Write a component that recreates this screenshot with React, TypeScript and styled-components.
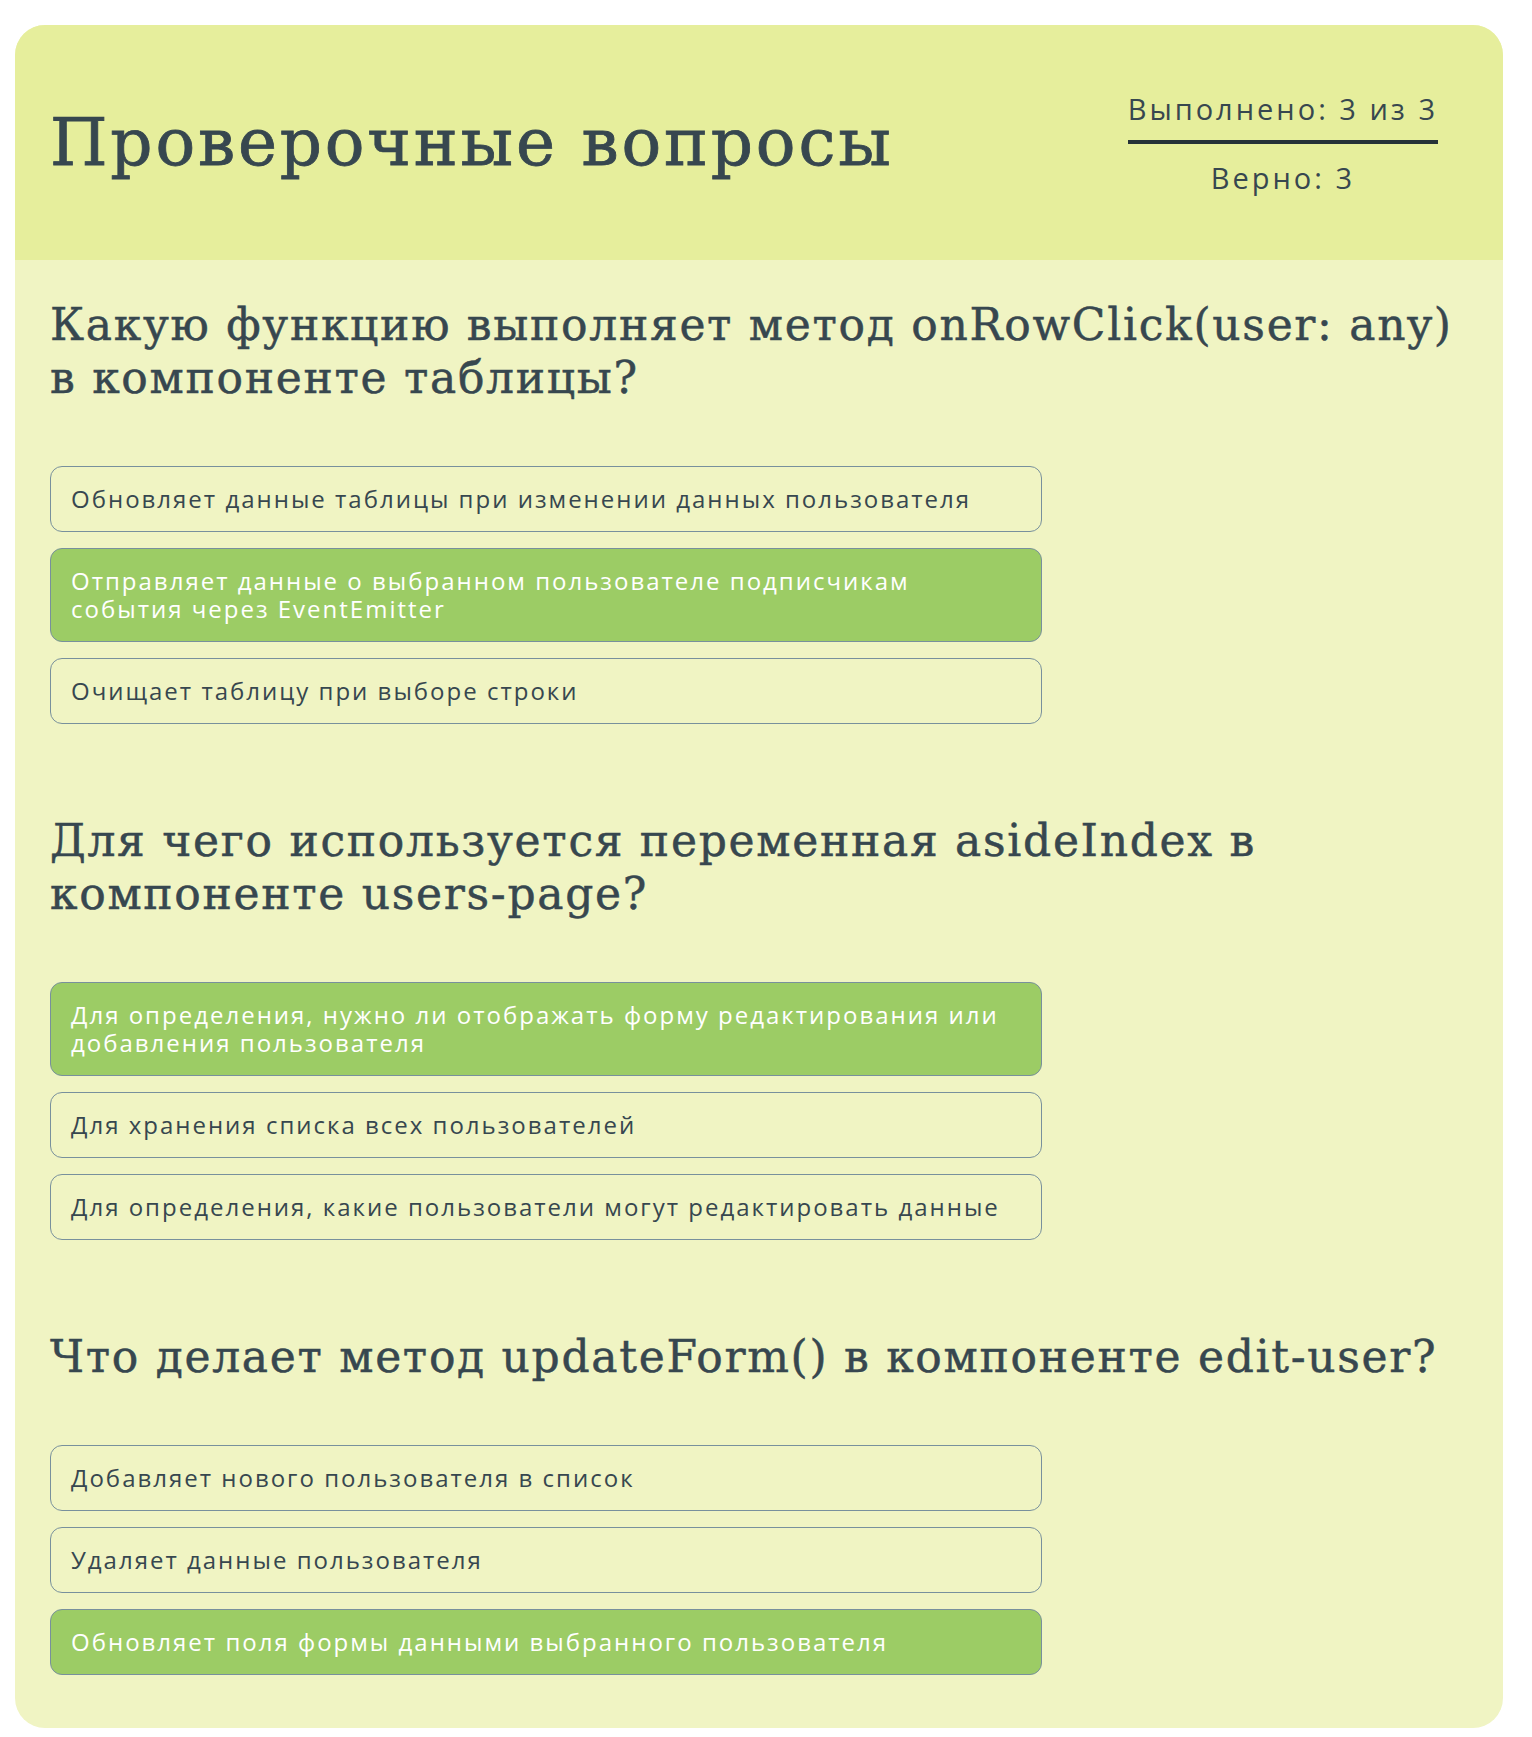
import * as React from "react";
import styled, { createGlobalStyle } from "styled-components";

const GlobalStyle = createGlobalStyle`
  body {
    margin: 0;
    background: #ffffff;
  }
`;

const Page = styled.div`
  padding: 25px 29px 9px 15px;
`;

const Card = styled.div`
  border-radius: 30px;
  overflow: hidden;
  background-color: #f0f4c3;
  color: #37474f;
`;

const Header = styled.header`
  height: 235px;
  box-sizing: border-box;
  padding: 0 65px 0 35px;
  display: flex;
  align-items: center;
  justify-content: space-between;
  background-color: #e6ee9c;
`;

const Title = styled.h1`
  margin: 0;
  font-family: "DejaVu Serif", "Liberation Serif", serif;
  font-weight: normal;
  font-size: 66px;
  line-height: 1.2;
  letter-spacing: 2.8px;
  -webkit-text-stroke: 0.8px currentColor;
`;

const Stats = styled.div`
  display: flex;
  flex-direction: column;
  align-items: center;
  font-family: "Open Sans", "Liberation Sans", sans-serif;
  font-size: 29px;
  letter-spacing: 3px;
`;

const Done = styled.div`
  padding-bottom: 12px;
  border-bottom: 4px solid #263238;
`;

const Correct = styled.div`
  margin-top: 14px;
`;

const Body = styled.main`
  padding: 38px 35px 53px;
  display: flex;
  flex-direction: column;
  gap: 90px;
`;

const Question = styled.section`
  display: flex;
  flex-direction: column;
`;

const QuestionText = styled.h2`
  margin: 0 0 62px;
  font-family: "DejaVu Serif", "Liberation Serif", serif;
  font-weight: normal;
  font-size: 44px;
  line-height: 53px;
  letter-spacing: 1.7px;
  -webkit-text-stroke: 0.5px currentColor;
`;

const Answers = styled.div`
  width: 992px;
  display: flex;
  flex-direction: column;
  gap: 16px;
`;

const Answer = styled.div<{ $chosen?: boolean }>`
  padding: 18px 20px;
  border: 1px solid #78909c;
  border-radius: 12px;
  font-family: "Open Sans", "Liberation Sans", sans-serif;
  font-size: 24px;
  line-height: 28px;
  letter-spacing: 2px;
  color: ${(p) => (p.$chosen ? "#ffffff" : "#37474f")};
  background-color: ${(p) => (p.$chosen ? "#9ccc65" : "transparent")};
  cursor: pointer;
`;

const questions = [
  {
    text: "Какую функцию выполняет метод onRowClick(user: any) в компоненте таблицы?",
    answers: [
      "Обновляет данные таблицы при изменении данных пользователя",
      "Отправляет данные о выбранном пользователе подписчикам события через EventEmitter",
      "Очищает таблицу при выборе строки",
    ],
    chosen: 1,
  },
  {
    text: "Для чего используется переменная asideIndex в компоненте users-page?",
    answers: [
      "Для определения, нужно ли отображать форму редактирования или добавления пользователя",
      "Для хранения списка всех пользователей",
      "Для определения, какие пользователи могут редактировать данные",
    ],
    chosen: 0,
  },
  {
    text: "Что делает метод updateForm() в компоненте edit-user?",
    answers: [
      "Добавляет нового пользователя в список",
      "Удаляет данные пользователя",
      "Обновляет поля формы данными выбранного пользователя",
    ],
    chosen: 2,
  },
];

const App = () => {
  return (
    <Page>
      <GlobalStyle />
      <Card>
        <Header>
          <Title>Проверочные вопросы</Title>
          <Stats>
            <Done>Выполнено: 3 из 3</Done>
            <Correct>Верно: 3</Correct>
          </Stats>
        </Header>
        <Body>
          {questions.map((q) => (
            <Question key={q.text}>
              <QuestionText>{q.text}</QuestionText>
              <Answers>
                {q.answers.map((a, i) => (
                  <Answer key={a} $chosen={i === q.chosen}>
                    {a}
                  </Answer>
                ))}
              </Answers>
            </Question>
          ))}
        </Body>
      </Card>
    </Page>
  );
};

export default App;
